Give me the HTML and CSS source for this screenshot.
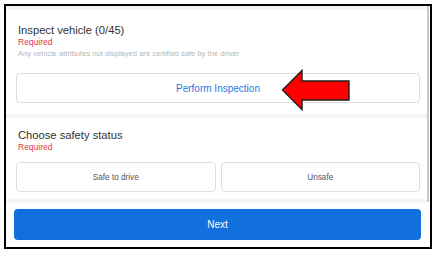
FILE: index.html
```html
<!DOCTYPE html>
<html lang="en">
<head>
    <meta charset="UTF-8">
    <meta name="viewport" content="width=device-width, initial-scale=1.0">
    <title>Vehicle inspection</title>
    <link rel="stylesheet" href="styles.css">
</head>
<body>
    <div class="frame">
        <div class="scroll">
            <div class="divider"></div>

            <div class="section section-inspect">
                <div class="title">Inspect vehicle (0/45)</div>
                <div class="required">Required</div>
                <div class="hint">Any vehicle attributes not displayed are certified safe by the driver</div>
                <div class="inspect">
                    <button class="option option-link">Perform Inspection</button>
                    <!-- callout arrow drawn over the button -->
                    <svg class="arrow" width="72" height="45" viewBox="0 0 72 45">
                        <polygon points="2.5,22 22,2.5 22,13 69,13 69,32 22,32 22,41.5" fill="#ff0000" stroke="#1e1e1e" stroke-width="1.4" stroke-linejoin="miter"/>
                    </svg>
                </div>
            </div>

            <div class="divider"></div>

            <div class="section section-status">
                <div class="title">Choose safety status</div>
                <div class="required">Required</div>
                <div class="choices">
                    <button class="option">Safe to drive</button>
                    <button class="option">Unsafe</button>
                </div>
            </div>

            <div class="divider"></div>
        </div>

        <div class="footer">
            <button class="next">Next</button>
        </div>
    </div>
</body>
</html>
```

FILE: styles.css
```css
body {
    margin: 0;
    font-family: "Liberation Sans", Arial, sans-serif;
    background-color: #ffffff;
}
.frame {
    box-sizing: border-box;
    width: 428px;
    height: 245px;
    margin: 4px 0 0 4px;
    border: 2px solid #000000;
    background: white;
    display: flex;
    flex-direction: column;
}
.scroll {
    height: 196px;
    margin-right: 1px;
    border-right: 2px solid #c9c9c9;
}
.divider {
    height: 4px;
    background-color: #f4f4f5;
}
.section {
    padding: 13px 7px 11px 10px;
}
.section-status {
    padding-top: 10px;
    padding-bottom: 7px;
}
.title {
    padding-left: 2px;
    font-size: 11.2px;
    line-height: 14px;
    color: #333333;
}
.required {
    padding-left: 2px;
    font-size: 8.5px;
    line-height: 10px;
    color: #e2374a;
}
.hint {
    margin-top: 2px;
    padding-left: 2px;
    font-size: 7.6px;
    line-height: 10px;
    color: #b6b6b6;
}
.inspect {
    position: relative;
    margin-top: 14px;
}
.option {
    display: block;
    box-sizing: border-box;
    width: 100%;
    height: 30px;
    padding: 0;
    border: 1px solid #dedede;
    border-radius: 4px;
    background: white;
    font-family: inherit;
    font-size: 8.2px;
    color: #555555;
}
.option-link {
    font-size: 10px;
    color: #2a78e0;
}
.arrow {
    position: absolute;
    left: 264px;
    top: -5px;
}
.choices {
    display: flex;
    gap: 5px;
    margin-top: 10px;
}
.footer {
    padding: 7px 9px 7px 8px;
}
.next {
    display: block;
    width: 100%;
    height: 31px;
    border: none;
    border-radius: 4px;
    background-color: #1270de;
    color: white;
    font-family: inherit;
    font-size: 10px;
}
```
